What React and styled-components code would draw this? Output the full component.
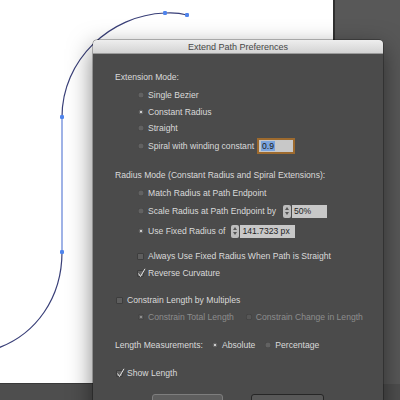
import styled, { createGlobalStyle } from 'styled-components';

const GlobalStyle = createGlobalStyle`
  html, body {
    margin: 0;
    padding: 0;
  }
  body {
    width: 400px;
    height: 400px;
    overflow: hidden;
    background: #565656;
    font-family: "Liberation Sans", Arial, sans-serif;
  }
`;

const Workspace = styled.div`
  position: relative;
  width: 400px;
  height: 400px;
  display: grid;
  grid-template-columns: 335px 1fr;
  grid-template-rows: 384px 1fr;
  background: #575757;
`;

const Artboard = styled.div`
  background: #ffffff;
  border-right: 2px solid #303030;
  border-bottom: 1px solid #3a3a3a;
  overflow: hidden;
`;

const Pasteboard = styled.div`
  background: #585858;
`;

const BottomBar = styled.div`
  grid-column: 1 / -1;
  background: #4e4e4e;
`;

const Dialog = styled.div`
  position: absolute;
  left: 93px;
  top: 40px;
  width: 290px;
  height: 390px;
  display: flex;
  flex-direction: column;
  background: #4b4b4b;
  border-radius: 4px 4px 0 0;
  box-shadow: 0 8px 24px rgba(0, 0, 0, 0.5), 0 0 0 0.5px rgba(0, 0, 0, 0.5);
  overflow: hidden;
`;

const TitleBar = styled.div`
  flex: none;
  height: 13px;
  background: linear-gradient(#eeeeee, #d3d3d3);
  border-bottom: 1px solid #9a9a9a;
  color: #474747;
  font-size: 9px;
  line-height: 14px;
  text-align: center;
`;

const Body = styled.div`
  padding: 16px 0 0 22px;
  display: flex;
  flex-direction: column;
`;

const Row = styled.div`
  display: flex;
  align-items: center;
  height: 14px;
  margin-top: ${(p) => p.$gap || 0}px;
  padding-left: ${(p) => p.$indent || 0}px;
  color: ${(p) => (p.$dim ? '#8d8d8d' : '#dadada')};
  font-size: 8.6px;
  white-space: nowrap;
`;

const Option = styled.span`
  display: inline-flex;
  align-items: center;
  margin-right: ${(p) => p.$space || 0}px;
`;

const Radio = styled.span`
  position: relative;
  flex: none;
  width: 6px;
  height: 6px;
  margin-right: 4px;
  border-radius: 50%;
  background: ${(p) => (p.$dim ? '#575757' : '#626262')};
  box-shadow: inset 0 0 0 0.5px rgba(0, 0, 0, 0.3);

  &::after {
    content: '';
    display: ${(p) => (p.$on ? 'block' : 'none')};
    position: absolute;
    inset: 2px;
    border-radius: 50%;
    background: ${(p) => (p.$dim ? '#a0a0a0' : '#f2f2f2')};
  }
`;

const Box = styled.span`
  position: relative;
  flex: none;
  width: 7px;
  height: 7px;
  margin-right: 4px;
  box-sizing: border-box;
  border: 1px solid #3d3d3d;
  border-radius: 1px;
  background: #5e5e5e;

  svg {
    position: absolute;
    left: -1px;
    top: -3px;
  }
`;

const Spinner = styled.span`
  flex: none;
  display: flex;
  flex-direction: column;
  align-items: center;
  justify-content: center;
  gap: 2px;
  width: 8px;
  height: 13px;
  margin: 0 1px 0 ${(p) => p.$left || 7}px;
  border-radius: 2px;
  background: #bdbdbd;
`;

const Field = styled.span`
  display: inline-flex;
  align-items: center;
  box-sizing: border-box;
  width: ${(p) => p.$w}px;
  height: 13px;
  padding-left: 2px;
  background: #c8c8c8;
  color: #1f1f1f;
  font-size: 8.6px;
`;

const FocusField = styled.span`
  display: inline-flex;
  align-items: center;
  box-sizing: border-box;
  width: 38px;
  height: 16px;
  margin-left: 3px;
  padding-left: 2px;
  border: 2px solid #9d6a2e;
  background: #c8c8c8;
  color: #1a1a1a;
  font-size: 8.6px;
`;

const Selected = styled.span`
  background: #7ba4dc;
  padding: 0 1px;
`;

const ButtonBar = styled.div`
  display: flex;
  gap: 28px;
  margin-top: 14px;
  padding-left: 37px;
`;

const Button = styled.div`
  box-sizing: border-box;
  width: ${(p) => p.$w}px;
  height: 20px;
  border: 1px solid ${(p) => (p.$primary ? '#262626' : '#7e7e7e')};
  border-radius: 3px;
  background: ${(p) => (p.$primary ? '#585858' : '#5e5e5e')};
  color: #e4e4e4;
  font-size: 9px;
  text-align: center;
  line-height: 22px;
`;

function Check() {
  return (
    <svg width="9" height="10" viewBox="0 0 9 10">
      <polyline points="1.5,5.5 3.5,8.5 8,0.8" fill="none" stroke="#e6e6e6" strokeWidth="1" />
    </svg>
  );
}

function Arrows() {
  return (
    <>
      <svg width="4" height="3" viewBox="0 0 4 3"><path d="M0 3 L2 0 L4 3Z" fill="#555" /></svg>
      <svg width="4" height="3" viewBox="0 0 4 3"><path d="M0 0 L4 0 L2 3Z" fill="#555" /></svg>
    </>
  );
}

function Curve() {
  return (
    <svg width="333" height="383" viewBox="0 0 333 383">
      <path d="M187 15 C180 13 172 12.5 165 13 C110 15 62 60 62 117" fill="none" stroke="#393f78" strokeWidth="1.2" />
      <path d="M62 117 L62 252" fill="none" stroke="#5f7fd6" strokeWidth="1.2" />
      <path d="M62 252 C62 298 36 334 -2 348" fill="none" stroke="#393f78" strokeWidth="1.2" />
      {[[165, 13], [187, 15], [62, 117], [62, 252]].map(([x, y]) => (
        <rect key={`${x}-${y}`} x={x - 2} y={y - 2} width="4" height="4" rx="1.2" fill="#4f84ec" />
      ))}
    </svg>
  );
}

export default function App() {
  return (
    <>
      <GlobalStyle />
      <Workspace>
        <Artboard>
          <Curve />
        </Artboard>
        <Pasteboard />
        <BottomBar />

        <Dialog>
          <TitleBar>Extend Path Preferences</TitleBar>
          <Body>
            <Row>Extension Mode:</Row>
            <Row $gap={4} $indent={23}><Radio />Single Bezier</Row>
            <Row $gap={3} $indent={23}><Radio $on />Constant Radius</Row>
            <Row $gap={2} $indent={23}><Radio />Straight</Row>
            <Row $gap={4} $indent={23}>
              <Radio />Spiral with winding constant
              <FocusField><Selected>0.9</Selected></FocusField>
            </Row>

            <Row $gap={15}>Radius Mode (Constant Radius and Spiral Extensions):</Row>
            <Row $gap={4} $indent={23}><Radio />Match Radius at Path Endpoint</Row>
            <Row $gap={4} $indent={23}>
              <Radio />Scale Radius at Path Endpoint by
              <Spinner><Arrows /></Spinner>
              <Field $w={35}>50%</Field>
            </Row>
            <Row $gap={6} $indent={23}>
              <Radio $on />Use Fixed Radius of
              <Spinner $left={6}><Arrows /></Spinner>
              <Field $w={55}>141.7323 px</Field>
            </Row>
            <Row $gap={11} $indent={22}><Box />Always Use Fixed Radius When Path is Straight</Row>
            <Row $gap={3} $indent={22}><Box><Check /></Box>Reverse Curvature</Row>

            <Row $gap={13} $indent={1}><Box />Constrain Length by Multiples</Row>
            <Row $gap={3} $indent={23} $dim>
              <Option $space={12}><Radio $dim $on />Constrain Total Length</Option>
              <Option><Radio $dim />Constrain Change in Length</Option>
            </Row>

            <Row $gap={14}>
              <Option $space={9}>Length Measurements:</Option>
              <Option $space={10}><Radio $on />Absolute</Option>
              <Option><Radio />Percentage</Option>
            </Row>

            <Row $gap={14} $indent={1}><Box><Check /></Box>Show Length</Row>

            <ButtonBar>
              <Button $w={71}>Cancel</Button>
              <Button $w={73} $primary>OK</Button>
            </ButtonBar>
          </Body>
        </Dialog>
      </Workspace>
    </>
  );
}
